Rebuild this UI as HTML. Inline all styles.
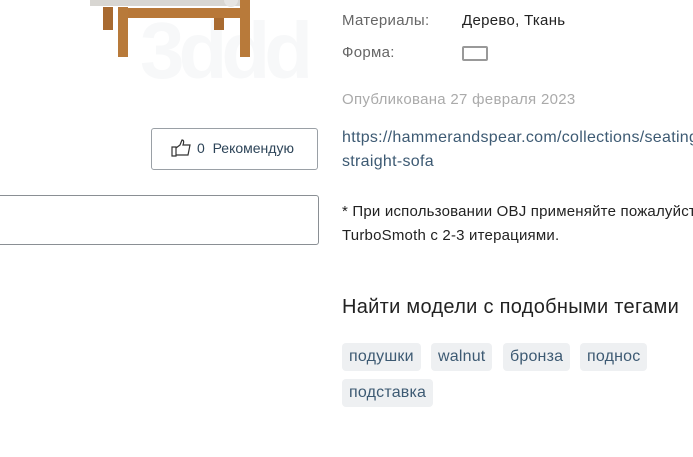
<!DOCTYPE html>
<html><head><meta charset="utf-8"><style>
body{margin:0;width:693px;height:457px;background:#fff;position:relative;overflow:hidden;font-family:"Liberation Sans",sans-serif;}
.a{position:absolute;white-space:nowrap;}
.l{color:#666;font-size:15px;letter-spacing:0.3px}
.v{color:#222;font-size:15px;letter-spacing:0.3px}
.tag{position:absolute;background:#eef0f2;border-radius:4px;color:#3d5a73;font-size:16px;height:28px;line-height:28px;padding:0 7px;letter-spacing:0.2px}
</style></head><body>
<div class="a" style="left:140px;top:5px;font-size:80px;font-weight:bold;color:#f7f8f9;letter-spacing:-6px">3ddd</div>
<div class="a" style="left:90px;top:0;width:150px;height:6px;background:#d8d6d2"></div>
<div class="a" style="left:224px;top:0;width:14px;height:7px;background:#e6e5e3;border-radius:0 0 7px 7px"></div>
<div class="a" style="left:118px;top:8px;width:128px;height:10px;background:#b87838"></div>
<div class="a" style="left:103px;top:7px;width:10px;height:23px;background:#a86a30"></div>
<div class="a" style="left:118px;top:7px;width:10px;height:50px;background:#b87a3a"></div>
<div class="a" style="left:214px;top:18px;width:10px;height:12px;background:#a86a30"></div>
<div class="a" style="left:240px;top:0;width:10px;height:57px;background:#b87a3a"></div>
<div class="a" style="left:151px;top:128px;width:165px;height:40px;border:1px solid #9aa0a6;border-radius:3px;"></div>
<svg class="a" style="left:171px;top:139px" width="21" height="18" viewBox="0 0 21 18"><path d="M1 8h4v9H1zM5 9l4-3 2-5c2 0 2 2 1 5h7l-2 10H5" fill="none" stroke="#333" stroke-width="1.2"/></svg>
<div class="a" style="left:197px;top:140px;font-size:14px;color:#2d4458">0&nbsp; Рекомендую</div>
<div class="a" style="left:-5px;top:195px;width:322px;height:48px;border:1px solid #8a8f94;border-radius:3px;"></div>
<div class="a l" style="left:342px;top:12px">Материалы:</div>
<div class="a v" style="left:462px;top:12px">Дерево, Ткань</div>
<div class="a l" style="left:342px;top:44px">Форма:</div>
<div class="a" style="left:462px;top:46px;width:26px;height:15px;border:2px solid #999;border-radius:2px;box-sizing:border-box"></div>
<div class="a" style="left:342px;top:91px;font-size:15px;color:#aaa;letter-spacing:0.3px">Опубликована 27 февраля 2023</div>
<div class="a" style="left:342px;top:129px;font-size:16px;color:#3d5a73;letter-spacing:0.3px">https://hammerandspear.com/collections/seating</div>
<div class="a" style="left:342px;top:153px;font-size:16px;color:#3d5a73;letter-spacing:0.3px">straight-sofa</div>
<div class="a" style="left:342px;top:203px;font-size:15px;color:#222;letter-spacing:0.2px">* При использовании OBJ применяйте пожалуйста</div>
<div class="a" style="left:342px;top:227px;font-size:15px;color:#222;letter-spacing:0.2px">TurboSmoth с 2-3 итерациями.</div>
<div class="a" style="left:342px;top:296px;font-size:20px;color:#222;letter-spacing:0.3px">Найти модели с подобными тегами</div>
<div class="tag" style="left:342px;top:343px">подушки</div>
<div class="tag" style="left:431px;top:343px">walnut</div>
<div class="tag" style="left:503px;top:343px">бронза</div>
<div class="tag" style="left:580px;top:343px">поднос</div>
<div class="tag" style="left:342px;top:379px">подставка</div>
</body></html>
